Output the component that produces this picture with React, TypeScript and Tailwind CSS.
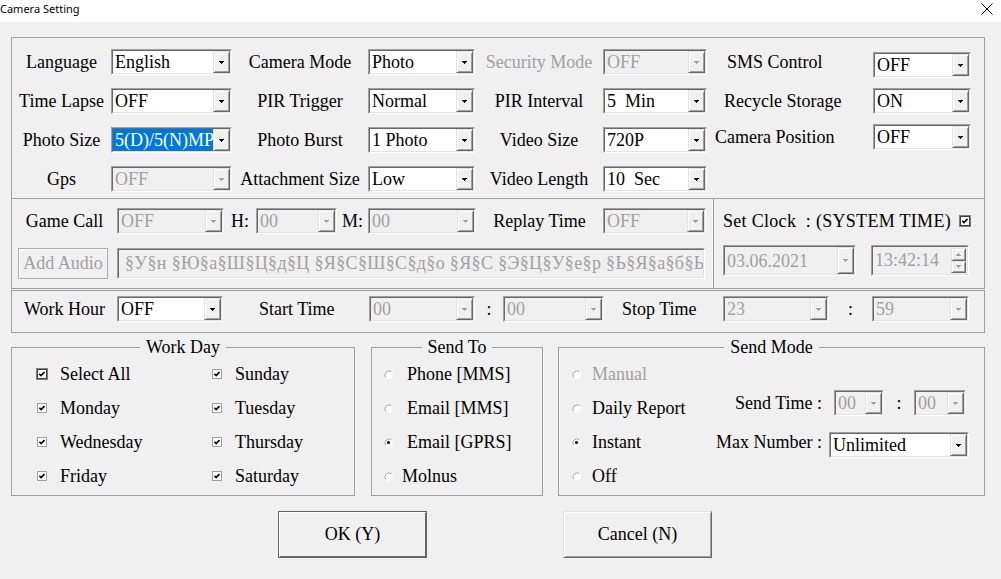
import React from "react";
import clsx from "clsx";

const GRAY = "text-[#a0a0a0]";
const RAISED =
  "bg-[#f0f0f0] border border-t-[#e3e3e3] border-l-[#e3e3e3] border-r-[#696969] border-b-[#696969] shadow-[inset_1px_1px_0_#fff,inset_-1px_-1px_0_#a0a0a0]";

function Arrow({ up, disabled }: { up?: boolean; disabled?: boolean }) {
  const c = disabled ? "#a0a0a0" : "#000";
  return (
    <svg width="5" height="3" viewBox="0 0 5 3" shapeRendering="crispEdges">
      {up ? (
        <>
          <rect x="2" y="0" width="1" height="1" fill={c} />
          <rect x="1" y="1" width="3" height="1" fill={c} />
          <rect x="0" y="2" width="5" height="1" fill={c} />
        </>
      ) : (
        <>
          <rect x="0" y="0" width="5" height="1" fill={c} />
          <rect x="1" y="1" width="3" height="1" fill={c} />
          <rect x="2" y="2" width="1" height="1" fill={c} />
        </>
      )}
    </svg>
  );
}

function Sunken({
  className,
  disabled,
  children,
}: {
  className?: string;
  disabled?: boolean;
  children?: React.ReactNode;
}) {
  return (
    <div
      className={clsx(
        "flex shrink-0 border border-t-[#a0a0a0] border-l-[#a0a0a0] border-r-white border-b-white",
        className
      )}
    >
      <div
        className={clsx(
          "flex flex-1 min-w-0 border border-t-[#696969] border-l-[#696969] border-r-[#e3e3e3] border-b-[#e3e3e3]",
          disabled ? "bg-[#f0f0f0]" : "bg-white"
        )}
      >
        {children}
      </div>
    </div>
  );
}

function Combo({
  className,
  h = "h-[26px]",
  value,
  disabled,
  selected,
}: {
  className?: string;
  h?: string;
  value: string;
  disabled?: boolean;
  selected?: boolean;
}) {
  return (
    <Sunken className={clsx(h, className)} disabled={disabled}>
      <div
        className={clsx(
          "flex-1 min-w-0 overflow-hidden whitespace-pre flex items-center",
          disabled ? GRAY : "text-black"
        )}
      >
        <span
          className={clsx(
            "pl-[2px] h-full flex items-center leading-none",
            selected && "bg-[#0078d7] text-white w-full"
          )}
        >
          {value}
        </span>
      </div>
      <div className={clsx("w-[17px] shrink-0 flex items-center justify-center", RAISED)}>
        <Arrow disabled={disabled} />
      </div>
    </Sunken>
  );
}

function Lbl({
  className,
  gray,
  children,
}: {
  className?: string;
  gray?: boolean;
  children: React.ReactNode;
}) {
  return (
    <div
      className={clsx(
        "shrink-0 flex items-center justify-center whitespace-pre",
        gray && GRAY,
        className
      )}
    >
      {children}
    </div>
  );
}

function Check({ dark }: { dark?: boolean }) {
  return dark ? (
    <svg width="12" height="12" viewBox="0 0 12 12" className="shrink-0">
      <rect x="0.5" y="0.5" width="11" height="11" fill="#fff" stroke="#808080" />
      <rect x="1.5" y="1.5" width="9" height="9" fill="#fff" stroke="#404040" />
      <path d="M3.2 5.8l1.8 1.8 3.6-3.6" stroke="#000" strokeWidth="1.6" fill="none" />
    </svg>
  ) : (
    <svg width="12" height="12" viewBox="0 0 12 12" className="shrink-0">
      <rect x="1.5" y="1.5" width="9" height="9" fill="#fff" stroke="#a0a0a0" />
      <path d="M3.4 5.8l1.7 1.7 3.4-3.4" stroke="#000" strokeWidth="1.6" fill="none" />
    </svg>
  );
}

function Radio({ on }: { on?: boolean }) {
  return (
    <svg width="9" height="9" viewBox="0 0 9 9" className="shrink-0">
      <circle cx="4.5" cy="4.5" r="4" fill="#fff" stroke="#fff" />
      <path d="M7.3 1.7A4 4 0 0 0 1.7 7.3" stroke="#a0a0a0" fill="none" />
      {on && <circle cx="4.5" cy="4.5" r="1.6" fill="#000" />}
    </svg>
  );
}

function Group({
  title,
  className,
  children,
}: {
  title: string;
  className?: string;
  children: React.ReactNode;
}) {
  return (
    <fieldset className={clsx("shrink-0 border border-[#a0a0a0] pb-[2px]", className)}>
      <legend className="mx-auto px-[6px] leading-[22px]">{title}</legend>
      <div className="-mt-[1px]">{children}</div>
    </fieldset>
  );
}

function DayItem({ label, dark }: { label: string; dark?: boolean }) {
  return (
    <div className="flex items-center h-[34px] pl-[24px] gap-[12px]">
      <Check dark={dark} />
      <span>{label}</span>
    </div>
  );
}

function RadioItem({
  label,
  on,
  gray,
  gap = "gap-[14px]",
  pl = "pl-[12px]",
}: {
  label: string;
  on?: boolean;
  gray?: boolean;
  gap?: string;
  pl?: string;
}) {
  return (
    <div className={clsx("flex items-center h-[34px]", pl, gap, gray && GRAY)}>
      <Radio on={on} />
      <span>{label}</span>
    </div>
  );
}

export default function App() {
  return (
    <div className="w-[1001px] h-[579px] overflow-hidden bg-[#f0f0f0] font-['Liberation_Serif',serif] text-[18px] text-black">
      {/* title bar */}
      <div className="h-[22px] bg-white flex items-start justify-between">
        <span className="font-['Noto_Sans',sans-serif] text-[11px] leading-[17px]">
          Camera Setting
        </span>
        <svg width="12" height="12" viewBox="0 0 12 12" className="mt-[3px] mr-[8px]">
          <path d="M0.5 0.5l11 11M11.5 0.5l-11 11" stroke="#000" strokeWidth="1" />
        </svg>
      </div>

      <div className="pl-[11px]">
        {/* main settings */}
        <div className="mt-[15px] w-[974px] h-[162px] border border-[#a0a0a0] flex">
          <div className="flex flex-col pt-[11px] gap-[13px]">
            <div className="flex h-[26px]">
              <Lbl className="w-[99px]">Language</Lbl>
              <Combo className="w-[121px]" value="English" />
              <Lbl className="w-[136px]">Camera Mode</Lbl>
              <Combo className="w-[107px]" value="Photo" />
              <Lbl className="w-[128px]" gray>
                Security Mode
              </Lbl>
              <Combo className="w-[104px]" value="OFF" disabled />
            </div>
            <div className="flex h-[26px]">
              <Lbl className="w-[99px]">Time Lapse</Lbl>
              <Combo className="w-[121px]" value="OFF" />
              <Lbl className="w-[136px]">PIR Trigger</Lbl>
              <Combo className="w-[107px]" value="Normal" />
              <Lbl className="w-[128px]">PIR Interval</Lbl>
              <Combo className="w-[104px]" value="5  Min" />
            </div>
            <div className="flex h-[26px]">
              <Lbl className="w-[99px]">Photo Size</Lbl>
              <Combo className="w-[121px]" value="5(D)/5(N)MP" selected />
              <Lbl className="w-[136px]">Photo Burst</Lbl>
              <Combo className="w-[107px]" value="1 Photo" />
              <Lbl className="w-[128px]">Video Size</Lbl>
              <Combo className="w-[104px]" value="720P" />
            </div>
            <div className="flex h-[26px]">
              <Lbl className="w-[99px]">Gps</Lbl>
              <Combo className="w-[121px]" value="OFF" disabled />
              <Lbl className="w-[136px]">Attachment Size</Lbl>
              <Combo className="w-[107px]" value="Low" />
              <Lbl className="w-[128px]">Video Length</Lbl>
              <Combo className="w-[104px]" value="10  Sec" />
            </div>
          </div>
          <div className="flex flex-col pt-[14px] gap-[10px]">
            <div className="flex h-[26px]">
              <Lbl className="w-[166px] justify-start pl-[20px] pb-[6px]">SMS Control</Lbl>
              <Combo className="w-[98px]" value="OFF" />
            </div>
            <div className="flex h-[26px]">
              <Lbl className="w-[166px] justify-start pl-[17px]">Recycle Storage</Lbl>
              <Combo className="w-[98px]" value="ON" />
            </div>
            <div className="flex h-[26px]">
              <Lbl className="w-[166px] justify-start pl-[8px]">Camera Position</Lbl>
              <Combo className="w-[98px]" value="OFF" />
            </div>
          </div>
        </div>

        {/* game call + clock */}
        <div className="w-[974px] h-[90px] border border-t-0 border-[#a0a0a0] flex">
          <div className="w-[702px] border-r border-[#a0a0a0] flex flex-col pt-[9px] gap-[14px]">
            <div className="flex h-[26px]">
              <Lbl className="w-[105px]">Game Call</Lbl>
              <Combo className="w-[107px]" value="OFF" disabled />
              <Lbl className="w-[32px]">H:</Lbl>
              <Combo className="w-[81px]" value="00" disabled />
              <Lbl className="w-[31px]">M:</Lbl>
              <Combo className="w-[108px]" value="00" disabled />
              <Lbl className="w-[127px]">Replay Time</Lbl>
              <Combo className="w-[103px]" value="OFF" disabled />
            </div>
            <div className="flex h-[31px]">
              <div
                className={clsx(
                  "ml-[6px] w-[90px] h-[31px] flex items-center justify-center border border-[#adadad] bg-[#f0f0f0] shadow-[inset_1px_1px_0_#fff]",
                  GRAY
                )}
              >
                Add Audio
              </div>
              <Sunken className="ml-[9px] w-[588px] h-[31px]" disabled>
                <div
                  className={clsx(
                    "flex-1 min-w-0 overflow-hidden whitespace-nowrap flex items-center pl-[6px] tracking-[0.35px]",
                    GRAY
                  )}
                >
                  §У§н §Ю§а§Ш§Ц§д§Ц §Я§С§Ш§С§д§о §Я§С §Э§Ц§У§е§р §Ь§Я§а§б§Ь§е
                </div>
              </Sunken>
            </div>
          </div>
          <div className="flex flex-col pl-[9px] pt-[9px]">
            <div className="flex items-center h-[26px] w-[248px]">
              <span className="whitespace-pre tracking-[0.3px]">Set Clock  : (SYSTEM TIME)</span>
              <span className="ml-auto">
                <Check dark />
              </span>
            </div>
            <div className="flex mt-[11px]">
              <Combo className="w-[133px]" h="h-[31px]" value="03.06.2021" disabled />
              <Sunken className="ml-[15px] w-[98px] h-[31px]" disabled>
                <div className={clsx("flex-1 flex items-center pl-[2px]", GRAY)}>13:42:14</div>
                <div className="w-[16px] shrink-0 flex flex-col py-[1px] pr-[1px]">
                  <div className={clsx("flex-1 flex items-center justify-center", RAISED)}>
                    <Arrow up disabled />
                  </div>
                  <div className={clsx("flex-1 flex items-center justify-center", RAISED)}>
                    <Arrow disabled />
                  </div>
                </div>
              </Sunken>
            </div>
          </div>
        </div>

        {/* work hour */}
        <div className="mt-[1px] w-[974px] h-[43px] border border-[#a0a0a0] flex items-start pt-[5px]">
          <div className="flex h-[26px]">
            <Lbl className="w-[105px]">Work Hour</Lbl>
            <Combo className="w-[106px]" value="OFF" />
            <Lbl className="w-[146px] justify-start pl-[36px]">Start Time</Lbl>
            <Combo className="w-[106px]" value="00" disabled />
            <Lbl className="w-[28px]">:</Lbl>
            <Combo className="w-[101px]" value="00" disabled />
            <Lbl className="w-[119px] justify-start pl-[18px]">Stop Time</Lbl>
            <Combo className="w-[106px]" value="23" disabled />
            <Lbl className="w-[43px]">:</Lbl>
            <Combo className="w-[97px]" value="59" disabled />
          </div>
        </div>

        {/* groups */}
        <div className="mt-[3px] flex items-start">
          <Group title="Work Day" className="w-[344px]">
            <div className="grid grid-cols-[175px_1fr]">
              <DayItem label="Select All" dark />
              <DayItem label="Sunday" />
              <DayItem label="Monday" />
              <DayItem label="Tuesday" />
              <DayItem label="Wednesday" />
              <DayItem label="Thursday" />
              <DayItem label="Friday" />
              <DayItem label="Saturday" />
            </div>
          </Group>
          <Group title="Send To" className="ml-[16px] w-[172px]">
            <RadioItem label="Phone [MMS]" />
            <RadioItem label="Email [MMS]" />
            <RadioItem label="Email [GPRS]" on />
            <RadioItem label="Molnus" gap="gap-[9px]" />
          </Group>
          <Group title="Send Mode" className="ml-[15px] w-[427px]">
            <div className="flex">
              <div className="flex flex-col">
                <RadioItem label="Manual" gray pl="pl-[13px]" gap="gap-[11px]" />
                <RadioItem label="Daily Report" pl="pl-[13px]" gap="gap-[11px]" />
                <RadioItem label="Instant" on pl="pl-[13px]" gap="gap-[11px]" />
                <RadioItem label="Off" pl="pl-[13px]" gap="gap-[11px]" />
              </div>
              <div className="ml-auto flex flex-col items-end pr-[15px] pt-[33px] gap-[16px]">
                <div className="flex items-center h-[26px] mr-[3px]">
                  <span className="whitespace-pre">Send Time :</span>
                  <Combo className="ml-[12px] w-[50px]" value="00" disabled />
                  <Lbl className="w-[30px]">:</Lbl>
                  <Combo className="w-[52px]" value="00" disabled />
                </div>
                <div className="flex items-center h-[26px]">
                  <span className="whitespace-pre mb-[6px]">Max Number :</span>
                  <Combo className="ml-[7px] w-[140px]" value="Unlimited" />
                </div>
              </div>
            </div>
          </Group>
        </div>

        {/* buttons */}
        <div className="mt-[15px] flex pl-[267px] gap-[136px]">
          <button className="w-[149px] h-[47px] bg-[#f0f0f0] border border-[#646464] shadow-[inset_1px_1px_0_#fff,inset_-1px_-1px_0_#696969]">
            OK (Y)
          </button>
          <button className={clsx("w-[149px] h-[47px]", RAISED)}>Cancel (N)</button>
        </div>
      </div>
    </div>
  );
}
